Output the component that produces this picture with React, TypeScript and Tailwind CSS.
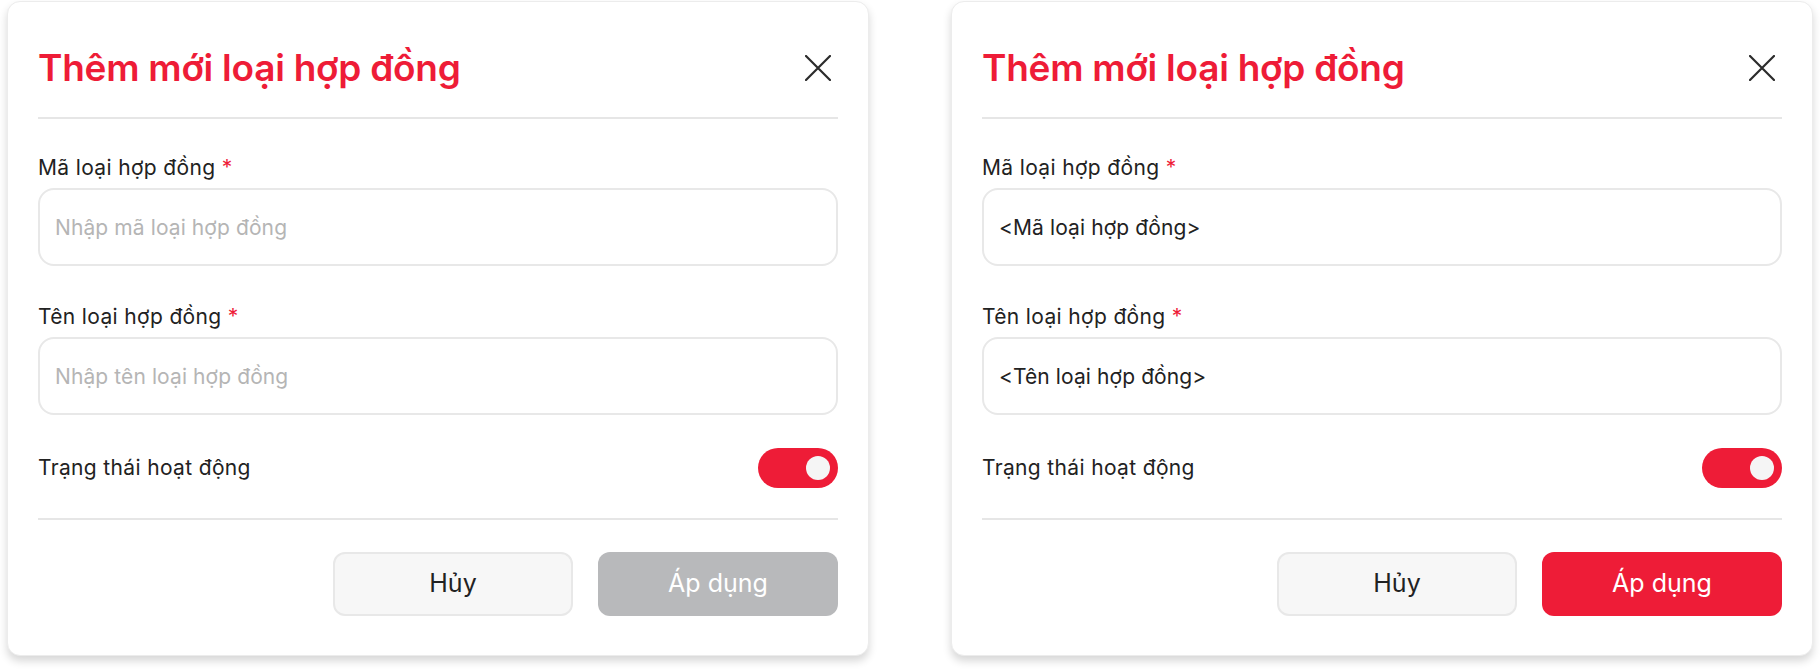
import { useState } from 'react';

type DialogProps = {
  code?: string;
  name?: string;
  canApply?: boolean;
};

const CloseIcon = () => (
  <svg width="26" height="26" viewBox="0 0 26 26" fill="none">
    <path d="M1 1L25 25M25 1L1 25" stroke="#2b2b2b" strokeWidth="2.2" strokeLinecap="round" />
  </svg>
);

const Field = ({ label, placeholder, value }: { label: string; placeholder: string; value?: string }) => (
  <div className="flex flex-col">
    <label className="text-[21px] leading-[28px] tracking-[0.35px] text-[#222222] mb-[6px]">
      {label} <span className="text-[#ee1c37]">*</span>
    </label>
    <input
      className="h-[78px] w-full rounded-[16px] border-2 border-[#e8e8e8] bg-white px-[15px] text-[21px] tracking-[0.1px] text-[#222222] placeholder:text-[#b5b5b5] outline-none"
      placeholder={placeholder}
      defaultValue={value}
    />
  </div>
);

const ContractTypeDialog = ({ code, name, canApply = false }: DialogProps) => {
  const [active, setActive] = useState(true);

  return (
    <div className="w-[862px] h-[655px] rounded-[13px] border border-[#ececec] bg-white px-[30px] pt-[43px] shadow-[0_5px_9px_rgba(0,0,0,0.16)]">
      <div className="flex items-center justify-between pb-[26px]">
        <h2 className="text-[37px] leading-[46px] font-semibold text-[#ee1c37] tracking-[-0.25px]">
          Thêm mới loại hợp đồng
        </h2>
        <button className="mr-[7px]">
          <CloseIcon />
        </button>
      </div>
      <div className="h-[2px] bg-[#e6e6e6]" />

      <div className="flex flex-col gap-[37px] pt-[35px]">
        <Field label="Mã loại hợp đồng" placeholder="Nhập mã loại hợp đồng" value={code} />
        <Field label="Tên loại hợp đồng" placeholder="Nhập tên loại hợp đồng" value={name} />
      </div>

      <div className="flex items-center justify-between pt-[33px] pb-[30px]">
        <span className="text-[21px] leading-[28px] tracking-[0.35px] text-[#222222]">Trạng thái hoạt động</span>
        <button
          onClick={() => setActive(!active)}
          className={`flex h-[40px] w-[80px] items-center rounded-full px-[8px] ${active ? 'justify-end bg-[#ee1c37]' : 'justify-start bg-[#d4d4d4]'}`}
        >
          <span className="h-[24px] w-[24px] rounded-full bg-[#f5f5f5]" />
        </button>
      </div>
      <div className="h-[2px] bg-[#e6e6e6]" />

      <div className="flex justify-end gap-[25px] pt-[32px]">
        <button className="h-[64px] w-[240px] rounded-[12px] border-2 border-[#e8e8e8] bg-[#f7f7f7] text-[25px] text-[#222222]">
          Hủy
        </button>
        <button
          disabled={!canApply}
          className={`h-[64px] w-[240px] rounded-[12px] text-[25px] text-white ${canApply ? 'bg-[#ee1c37]' : 'bg-[#b8b9bb]'}`}
        >
          Áp dụng
        </button>
      </div>
    </div>
  );
};

export default function App() {
  return (
    <div className="w-[1820px] h-[670px] bg-white pt-px px-[7px] flex gap-[82px] font-['Inter','Noto_Sans',sans-serif]">
      <ContractTypeDialog />
      <ContractTypeDialog code="<Mã loại hợp đồng>" name="<Tên loại hợp đồng>" canApply />
    </div>
  );
}
